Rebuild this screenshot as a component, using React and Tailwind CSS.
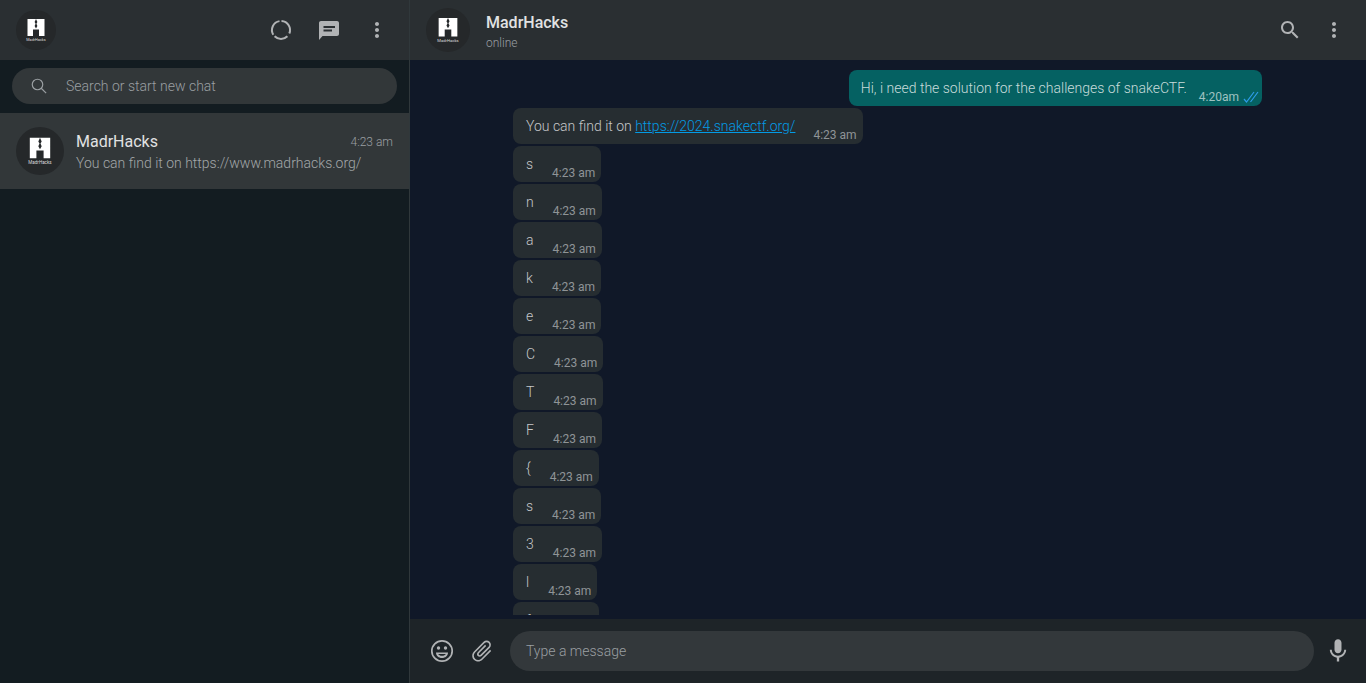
import React from 'react'

const letters = ['s', 'n', 'a', 'k', 'e', 'C', 'T', 'F', '{', 's', '3', 'l', 'f']

function Logo({ size }) {
  return (
    <svg width={size} height={size} viewBox="0 0 40 40">
      <path
        fill="#fff"
        fillRule="evenodd"
        d="M11.500 9h17v17h-17zM17 19.500h6V26h-6zM20 9l1.400 3-1 1.800 1 2.200-1.400 2.500-1.400-2.500 1-2.200-1-1.800z"
      />
      <text x="20" y="30.500" textAnchor="middle" fontSize="3.800" fill="#ddd" fontFamily="Roboto, sans-serif">
        MadrHacks
      </text>
    </svg>
  )
}

function Avatar({ className, size }) {
  return (
    <div className={`flex shrink-0 items-center justify-center rounded-full bg-[#25282a] ${className}`}>
      <Logo size={size} />
    </div>
  )
}

function Icon({ children, className = 'w-6 h-6 text-[#b1b3b5]' }) {
  return (
    <svg viewBox="0 0 24 24" fill="currentColor" className={className}>
      {children}
    </svg>
  )
}

function MoreIcon() {
  return (
    <Icon>
      <path d="M12 8c1.100 0 2-.9 2-2s-.9-2-2-2-2 .9-2 2 .9 2 2 2zm0 2c-1.100 0-2 .9-2 2s.9 2 2 2 2-.9 2-2-.9-2-2-2zm0 6c-1.100 0-2 .9-2 2s.9 2 2 2 2-.9 2-2-.9-2-2-2z" />
    </Icon>
  )
}

function Received({ text, children }) {
  return (
    <div className="flex h-9 w-fit shrink-0 rounded-lg bg-[#262d31]">
      <span className="pl-[13px] pt-[8px] text-sm leading-5 font-light text-[#c5c7c9]">{children || text}</span>
      <span className={`${children ? 'ml-[18px]' : 'ml-[19px]'} mr-[6px] self-end pb-[1px] text-xs leading-4 text-[#8f9497]`}>
        4:23 am
      </span>
    </div>
  )
}

export default function App() {
  return (
    <div className="flex h-screen overflow-hidden bg-[#131c21] font-['Roboto',sans-serif]">
      <aside className="flex w-[410px] shrink-0 flex-col border-r border-[#30383b]">
        <header className="flex h-[60px] shrink-0 items-center bg-[#2a2f32] pl-4 pr-5">
          <Avatar className="h-10 w-10" size={40} />
          <div className="ml-auto flex items-center gap-[24px]">
            <Icon>
              <path
                fill="none"
                stroke="currentColor"
                strokeWidth="2"
                d="M12.500 3.010a9 9 0 0 1 7.800 12.500M18.400 18.300a9 9 0 0 1-12.800 0M4.300 16.700A9 9 0 0 1 10.500 3.130"
              />
            </Icon>
            <Icon className="h-6 w-6 text-[#b1b3b5]">
              <path d="M20 3H4c-1.100 0-1.990.9-1.990 2L2 22l3.500-4H20c1.100 0 2-.9 2-2V5c0-1.100-.9-2-2-2zM6.500 8H18v2H6.500V8zm0 3.500H15v2H6.500v-2z" />
            </Icon>
            <MoreIcon />
          </div>
        </header>

        <div className="flex h-[52px] shrink-0 items-center px-3">
          <div className="flex h-9 w-[385px] items-center rounded-[18px] bg-[#323739] pl-[18px]">
            <svg viewBox="0 0 24 24" fill="none" stroke="currentColor" strokeWidth="1.600" className="h-[18px] w-[18px] text-[#9a9fa2]">
              <circle cx="10" cy="10" r="7" />
              <path d="M15 15l6.500 6.500" />
            </svg>
            <span className="ml-[18px] text-sm font-light text-[#9a9fa2]">Search or start new chat</span>
          </div>
        </div>

        <div className="mt-px flex h-[76px] shrink-0 items-center bg-[#323739] pl-4 pr-4">
          <Avatar className="h-12 w-12" size={48} />
          <div className="ml-3 min-w-0 flex-1 pt-[2px]">
            <div className="flex items-center justify-between">
              <span className="text-base leading-[22px] text-[#e1e2e3]">MadrHacks</span>
              <span className="text-xs font-light text-[#9a9fa2]">4:23 am</span>
            </div>
            <div className="text-sm leading-5 font-light text-[#a3a7a9]">You can find it on https://www.madrhacks.org/</div>
          </div>
        </div>
      </aside>

      <main className="flex min-w-0 flex-1 flex-col bg-[#101828]">
        <header className="flex h-[60px] shrink-0 items-center bg-[#2a2f32] pl-4 pr-5">
          <Avatar className="h-11 w-11" size={44} />
          <div className="ml-[16px] pt-[4px]">
            <div className="text-base leading-[22px] font-medium text-[#e1e2e3]">MadrHacks</div>
            <div className="text-xs leading-[18px] font-light text-[#9a9fa2]">online</div>
          </div>
          <div className="ml-auto flex items-center gap-5">
            <Icon className="h-6 w-6 text-[#b1b3b5]">
              <path d="M15.500 14h-.79l-.28-.27C15.410 12.590 16 11.110 16 9.500 16 5.910 13.090 3 9.500 3S3 5.910 3 9.500 5.910 16 9.500 16c1.610 0 3.090-.59 4.230-1.570l.27.28v.79l5 4.990L20.490 19l-4.990-5zm-6 0C7.010 14 5 11.990 5 9.500S7.010 5 9.500 5 14 7.010 14 9.500 11.990 14 9.500 14z" />
            </Icon>
            <MoreIcon />
          </div>
        </header>

        <section className="mb-1 flex min-h-0 flex-1 flex-col gap-[2px] overflow-hidden pl-[103px] pr-[104px] pt-[10px]">
          <div className="flex h-9 w-fit shrink-0 self-end rounded-lg bg-[#056162]">
            <span className="pl-3 pt-2 text-sm leading-5 font-light text-[#c8dcdb]">
              Hi, i need the solution for the challenges of snakeCTF.
            </span>
            <span className="ml-3 self-end pb-[1px] text-xs leading-4 text-[#9fc2c1]">4:20am</span>
            <svg viewBox="0 0 16 12" className="mb-[3px] ml-[4px] mr-[3px] h-3 w-4 self-end text-[#2d9ce8]" fill="none" stroke="currentColor" strokeWidth="1.200">
              <path d="M1 8l2.500 3L11 1M7.500 11L15 1" />
            </svg>
          </div>

          <Received>
            You can find it on{' '}
            <a href="#" className="text-[#039be5] underline">
              https://2024.snakectf.org/
            </a>
          </Received>

          {letters.map((letter, i) => (
            <Received key={i} text={letter} />
          ))}
        </section>

        <footer className="flex h-[64px] shrink-0 items-center bg-[#1e2428] pl-5 pr-[14px]">
          <Icon className="h-6 w-6 text-[#b1b3b5]">
            <circle cx="12" cy="12" r="10.200" fill="none" stroke="currentColor" strokeWidth="1.700" />
            <circle cx="8.500" cy="9" r="1.700" />
            <circle cx="15.500" cy="9" r="1.700" />
            <path d="M6 13.500h12c0 3.300-2.700 5.500-6 5.500s-6-2.200-6-5.500zm2.200 1.500c.6 1 2 1.800 3.800 1.800s3.200-.8 3.800-1.800H8.200z" fillRule="evenodd" />
          </Icon>
          <Icon className="ml-[15px] h-[26px] w-[26px] rotate-45 text-[#b1b3b5]">
            <path d="M16.500 6v11.500c0 2.210-1.790 4-4 4s-4-1.790-4-4V5c0-1.380 1.120-2.500 2.500-2.500s2.500 1.120 2.500 2.500v10.500c0 .55-.45 1-1 1s-1-.45-1-1V6H10v9.500c0 1.380 1.120 2.500 2.500 2.500s2.500-1.120 2.500-2.500V5c0-2.210-1.790-4-4-4S7 2.790 7 5v12.500c0 3.040 2.460 5.500 5.500 5.500s5.500-2.460 5.500-5.500V6h-1.500z" />
          </Icon>
          <div className="ml-[15px] flex h-10 flex-1 items-center rounded-[20px] bg-[#33383b] pl-4">
            <span className="text-sm font-light text-[#9a9fa2]">Type a message</span>
          </div>
          <Icon className="ml-[10px] h-[28px] w-[28px] text-[#b1b3b5]">
            <path d="M12 14c1.660 0 2.990-1.340 2.990-3L15 5c0-1.660-1.340-3-3-3S9 3.340 9 5v6c0 1.660 1.340 3 3 3zm5.300-3c0 3-2.540 5.100-5.300 5.100S6.700 14 6.700 11H5c0 3.410 2.720 6.230 6 6.720V21h2v-3.280c3.280-.48 6-3.300 6-6.720h-1.700z" />
          </Icon>
        </footer>
      </main>
    </div>
  )
}
